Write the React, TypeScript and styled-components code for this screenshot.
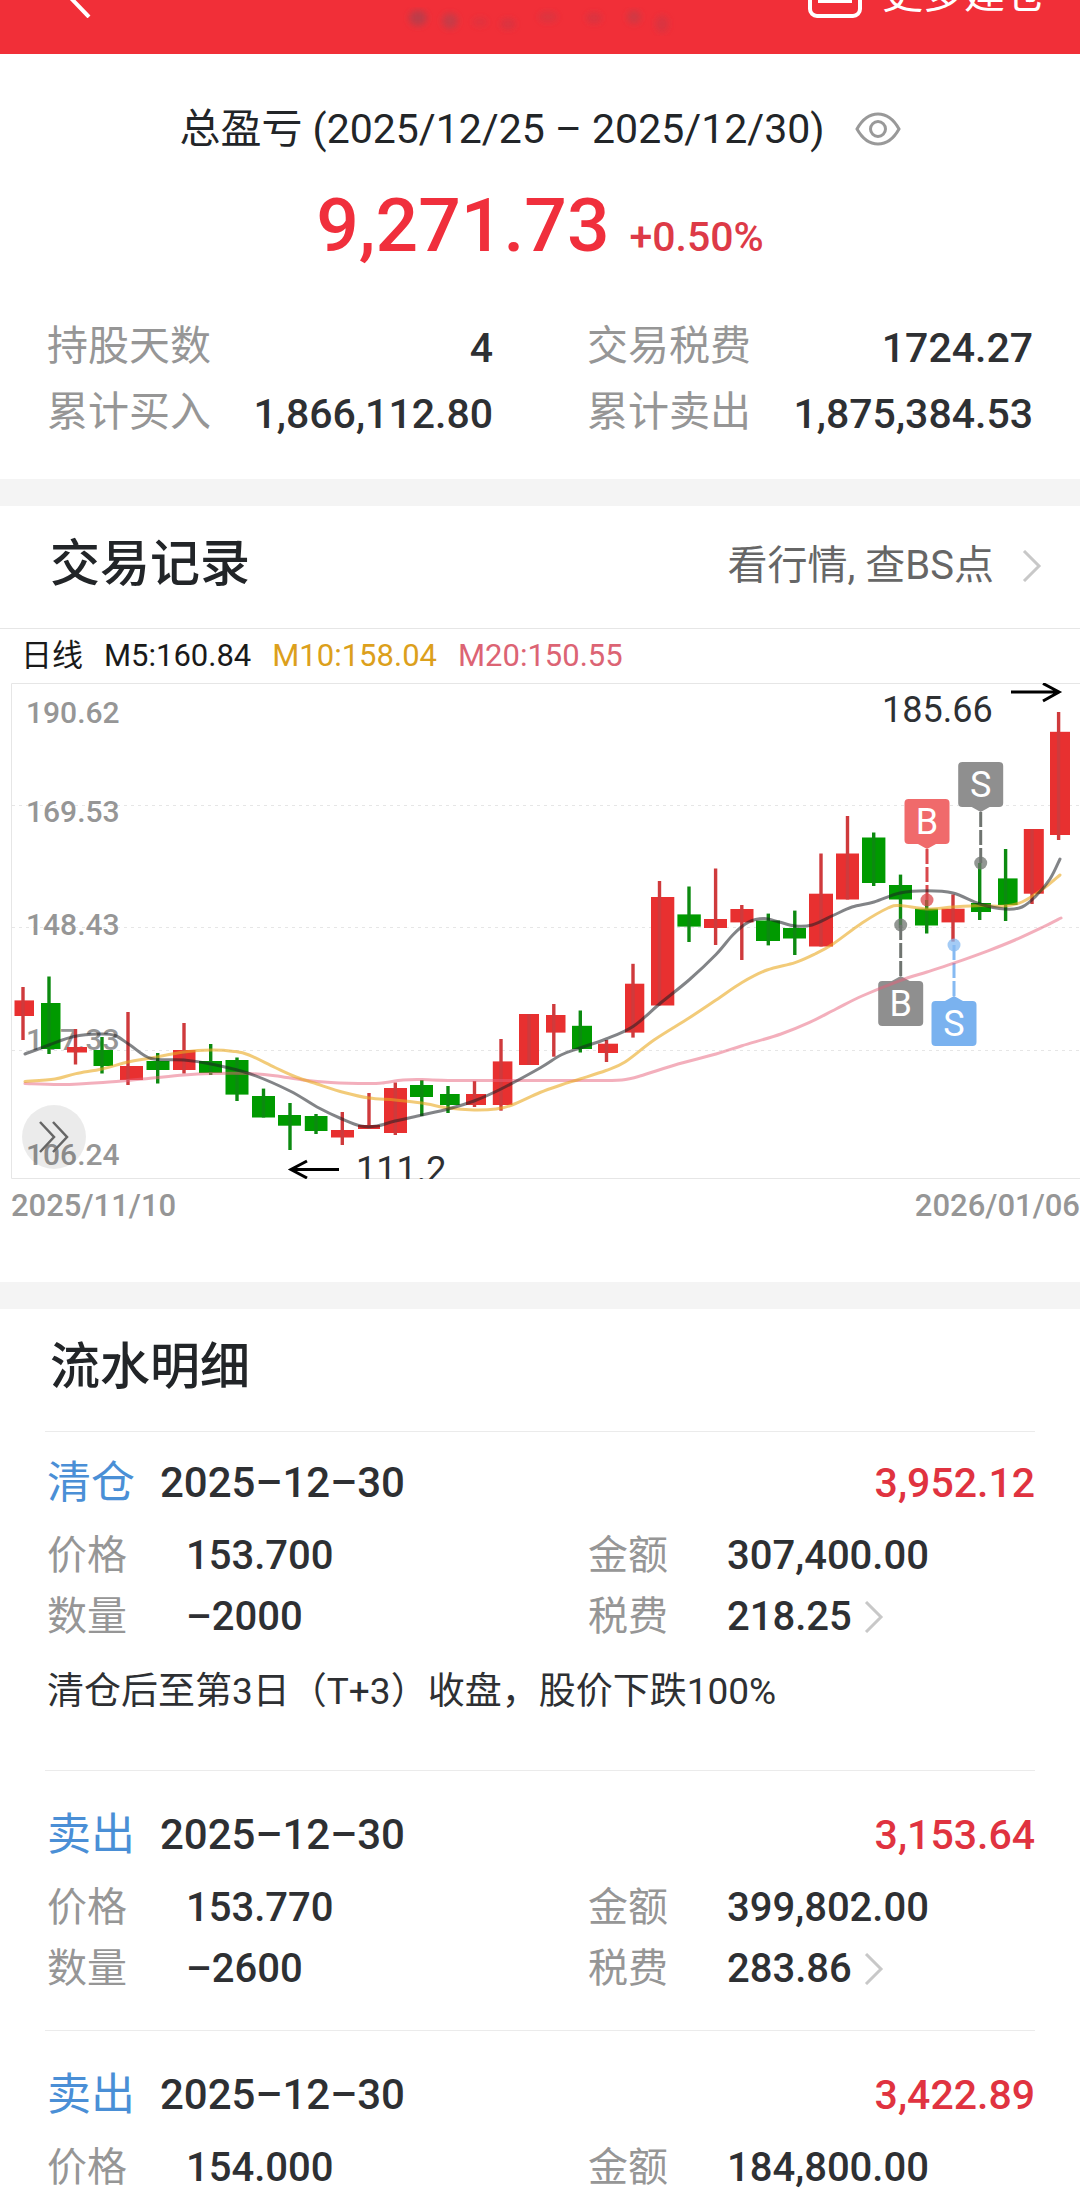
import React from 'react';
import styled, { createGlobalStyle } from 'styled-components';

const GlobalStyle = createGlobalStyle`
  *, *::before, *::after { box-sizing: border-box; }
  body {
    margin: 0;
    background: #fff;
    color: #2e3033;
    font-family: Roboto, "Noto Sans CJK SC", sans-serif;
  }
  button { border: 0; padding: 0; background: none; font: inherit; color: inherit; cursor: pointer; }
  h1, h2, p, dl, dd, ul { margin: 0; padding: 0; font-weight: 400; }
  svg { display: block; flex: none; }
`;

const Page = styled.main`
  overflow: hidden;
`;

const TopBar = styled.header`
  display: grid;
  grid-template-columns: 1fr auto 1fr;
  grid-template-rows: minmax(0, 1fr);
  align-items: end;
  height: 54px;
  padding: 0 34px 12px;
  overflow: hidden;
  background: #f12f38;
  color: #fff;
`;

const TopButton = styled.button<{ $side: 'start' | 'end' }>`
  display: flex;
  align-items: flex-end;
  justify-self: ${(p) => p.$side};
  gap: 20px;
  margin: 0 0 24px ${(p) => (p.$side === 'start' ? 30 : 0)}px;
  font-size: 41px;
  line-height: 48px;
`;

const TopLabel = styled.span`
  height: 48px;
`;

const Summary = styled.section`
  padding: 45px 47px 34px;
`;

const PeriodRow = styled.div`
  display: flex;
  align-items: center;
  justify-content: center;
  gap: 30px;
  height: 60px;
`;

const Period = styled.h1`
  font-size: 41px;
  line-height: 60px;
  color: #222528;
`;

const TotalRow = styled.p`
  display: flex;
  align-items: baseline;
  justify-content: center;
  gap: 20px;
  margin: 21px 0 43px;
`;

const Total = styled.strong`
  font-size: 75px;
  line-height: 90px;
  font-weight: 500;
  color: #f02f3c;
`;

const Percent = styled.span`
  font-size: 41px;
  line-height: 48px;
  font-weight: 500;
  color: #dd3a47;
`;

const TwoColumns = styled.dl`
  display: grid;
  grid-template-columns: 1fr 1fr;
  column-gap: 94px;
`;

const Stat = styled.div`
  display: flex;
  align-items: center;
  justify-content: space-between;
  height: 66px;
  font-size: 41px;

  dd { padding-top: 4px; }
`;

const Label = styled.dt`
  line-height: 60px;
  color: #969696;
`;

const Value = styled.dd`
  line-height: 60px;
  font-weight: 500;
`;

const Band = styled.hr`
  height: 27px;
  margin: 0;
  border: 0;
  background: #f4f4f4;
`;

const SectionHead = styled.div`
  display: flex;
  align-items: center;
  justify-content: space-between;
  height: 122px;
  padding: 0 38px 6px 50px;
`;

const SectionTitle = styled.h2`
  font-size: 50px;
  line-height: 60px;
  font-weight: 500;
  color: #222528;
`;

const QuoteLink = styled.a`
  display: flex;
  align-items: center;
  gap: 28px;
  padding-top: 4px;
  font-size: 40px;
  line-height: 60px;
  color: #666;
  text-decoration: none;
`;

const Legend = styled.div`
  display: flex;
  align-items: center;
  gap: 21px;
  height: 55px;
  padding-left: 21px;
  border-top: 1px solid #e6e6e6;
  font-size: 31px;
  line-height: 40px;
  color: #1a1a1a;
`;

const LegendItem = styled.span<{ $color: string }>`
  color: ${(p) => p.$color};
`;

const ChartArea = styled.div`
  position: relative;
`;

const ExpandButton = styled.button`
  position: absolute;
  left: 2%;
  bottom: 10px;
  display: grid;
  place-items: center;
  width: 64px;
  height: 64px;
  border-radius: 50%;
  background: rgba(0, 0, 0, 0.08);
`;

const DateAxis = styled.div`
  display: flex;
  justify-content: space-between;
  height: 103px;
  padding-left: 11px;
  font-size: 31px;
  line-height: 54px;
  font-weight: 500;
  color: #969696;
  white-space: nowrap;
`;

const Records = styled.ul`
  padding: 0 45px;
  list-style: none;
`;

const Record = styled.li<{ $compact?: boolean }>`
  padding: ${(p) => (p.$compact ? 21 : 34)}px 0 31px 2px;
  border-top: 1px solid #ebebeb;
  &:last-child { padding-bottom: 0; }
`;

const RecordHead = styled.div`
  display: flex;
  align-items: center;
  gap: 25px;
  height: 60px;
  margin-bottom: 12px;
  line-height: 60px;
  font-weight: 500;
`;

const Action = styled.span`
  font-size: 44px;
  font-weight: 400;
  color: #4a8fd6;
`;

const RecordDate = styled.time`
  font-size: 42px;
`;

const Profit = styled.span`
  margin-left: auto;
  font-size: 41px;
  color: #e03340;
`;

const Field = styled.div`
  display: grid;
  grid-template-columns: 139px 1fr;
  align-items: center;
  height: 61px;
  font-size: 40px;
`;

const FeeButton = styled.button`
  display: flex;
  align-items: center;
  gap: 12px;
`;

const Note = styled.p`
  margin: 20px 0 22px;
  font-size: 37px;
  line-height: 50px;
`;

function Chevron() {
  return (
    <svg width="20" height="32" viewBox="0 0 20 32" fill="none" stroke="#c8c8c8" strokeWidth="3" aria-hidden="true">
      <path d="M2 1 17 16 2 31" />
    </svg>
  );
}

type Candle = [left: number, right: number, top: number, bottom: number, wick: number, high: number, low: number, up: 0 | 1];

const candles: Candle[] = [
  [14.5, 34, 1000.4, 1016, 23, 987, 1040, 1],
  [41, 60.5, 1003, 1049, 49, 976.5, 1054, 0],
  [67, 87, 1047, 1052.5, 75.5, 1029, 1064.5, 1],
  [93.5, 113, 1050, 1066, 102, 1037, 1073.5, 0],
  [120, 143, 1066, 1080, 128, 1012, 1085, 1],
  [146.5, 169.5, 1061, 1070, 157.7, 1053, 1083.5, 0],
  [173, 195.5, 1050, 1070, 184, 1023, 1073.5, 1],
  [199, 222, 1061, 1073, 210.7, 1044, 1075, 0],
  [225.5, 248.5, 1060, 1094.6, 237, 1057.5, 1101, 0],
  [252, 275, 1096, 1117.5, 263.5, 1088.6, 1117.5, 0],
  [278, 301, 1115, 1125.7, 290, 1103, 1150, 0],
  [304.8, 327.5, 1116, 1131, 316, 1114, 1134, 0],
  [331, 354, 1130, 1137.5, 342.3, 1112, 1145, 1],
  [358, 380, 1125, 1129, 369, 1093, 1129, 1],
  [384, 407, 1088, 1133, 395.3, 1082.5, 1135, 1],
  [410, 433, 1085, 1097, 421.8, 1080, 1116, 0],
  [440, 459.7, 1094, 1105, 448, 1086, 1113, 0],
  [466, 486, 1094, 1105, 474.5, 1081, 1107, 1],
  [492.8, 512.4, 1061.4, 1105, 501, 1039, 1110.7, 1],
  [519, 539, 1014, 1065, 529, 1014, 1065, 1],
  [546, 565.5, 1015, 1032.6, 553.8, 1004, 1056.7, 1],
  [572, 592, 1025.8, 1049, 580.3, 1010.5, 1052.5, 0],
  [598, 618, 1043.7, 1053, 606.5, 1040, 1062, 1],
  [625, 644.3, 983.7, 1032.6, 633, 963.8, 1037.6, 1],
  [651, 674.3, 897, 1005.5, 659.5, 881, 1005.5, 1],
  [677.4, 700.8, 914.4, 926.6, 689, 886.5, 942, 0],
  [704, 727, 919, 928, 715.6, 868.5, 945, 1],
  [730.4, 753.5, 909, 922.4, 741.8, 905, 960, 1],
  [756, 780, 920.5, 941, 768.3, 913.6, 945.4, 0],
  [783, 806, 928, 938.5, 794.8, 910.6, 955, 0],
  [809, 833, 893.7, 946.5, 821, 853.5, 946.5, 1],
  [836, 859, 853.5, 899.5, 847.5, 816, 899.5, 1],
  [862, 885.4, 837.5, 883, 873.7, 832.5, 886, 0],
  [889, 912, 885, 899.5, 900.5, 874.6, 928, 0],
  [915, 938, 908.7, 925.5, 926.7, 900, 933.5, 0],
  [941.5, 964.6, 908.7, 922.4, 953, 894.5, 941.6, 1],
  [971, 991, 903, 912, 979.7, 863, 920, 0],
  [998, 1017.6, 878.4, 905, 1005.6, 849, 921, 0],
  [1023.8, 1043.8, 829, 893.7, 1032, 829, 904, 1],
  [1050, 1070, 731.8, 835, 1058.6, 712, 840, 1],
];

const ma5 = [
  25, 1054, 49, 1045, 74, 1036.5, 100, 1034, 115, 1035.5, 130, 1045, 151, 1058.5, 184, 1060, 211, 1064, 249, 1073.5,
  290, 1091, 317, 1107, 342, 1119, 361, 1126, 377, 1126, 395, 1121, 422, 1115, 448, 1109, 474, 1101, 501, 1089,
  540, 1068, 561, 1055, 580, 1048, 606, 1039, 633, 1026.5, 660, 1003.5, 689, 980, 716, 954.5, 733, 934.7,
  748, 922.4, 764, 918.6, 779, 922, 795, 926, 812, 925, 833, 915.5, 852, 907, 874, 902, 900, 893, 927, 890.7,
  953, 893, 980, 904, 1005, 909, 1022, 907, 1036, 896, 1050, 879, 1060, 859,
];

const ma10 = [
  25, 1081.4, 55, 1079, 76, 1073.6, 102, 1069, 128, 1062, 151, 1058, 184, 1052, 211, 1050, 234, 1051.4, 249, 1055,
  275, 1067.5, 296, 1077, 317, 1084, 344, 1092.5, 369, 1098, 395, 1100, 422, 1103, 448, 1108, 474, 1110, 496, 1109,
  512, 1105, 540, 1092.5, 561, 1085, 580, 1079, 606, 1070.5, 625, 1062, 654, 1040, 689, 1018, 716, 1000,
  742, 982.5, 767, 970, 795, 962.6, 815, 954, 833, 944, 862, 923, 888, 908, 900, 905.6, 927, 909, 953, 907,
  980, 905.6, 1005, 906, 1022, 902, 1043, 889, 1060, 875,
];

const ma20 = [
  25, 1083.6, 62, 1084.6, 103, 1082.5, 143, 1079, 184, 1075, 211, 1073.6, 249, 1073.6, 275, 1075.7, 303, 1080,
  331, 1082.5, 369, 1083.6, 382, 1083, 403, 1080, 422, 1079.6, 448, 1080.4, 540, 1080.4, 600, 1080.4, 622, 1080,
  640, 1076, 678, 1064, 716, 1054, 742, 1045.7, 781, 1034, 809, 1022.7, 836, 1009, 862, 996, 900, 980.6, 927, 972,
  953, 963.4, 988, 950.8, 1015, 940, 1043, 927, 1061, 918,
];

/* Catmull-Rom spline through flat x, y pairs */
function spline(values: number[]) {
  const points: [number, number][] = [];
  for (let i = 0; i < values.length; i += 2) points.push([values[i], values[i + 1]]);
  let d = `M${points[0][0]} ${points[0][1]}`;
  for (let i = 0; i < points.length - 1; i += 1) {
    const before = points[i - 1] ?? points[i];
    const from = points[i];
    const to = points[i + 1];
    const after = points[i + 2] ?? to;
    d += `C${from[0] + (to[0] - before[0]) / 6} ${from[1] + (to[1] - before[1]) / 6} `;
    d += `${to[0] - (after[0] - from[0]) / 6} ${to[1] - (after[1] - from[1]) / 6} ${to[0]} ${to[1]}`;
  }
  return d;
}

const markers = [
  { text: 'S', x: 980.7, box: 762, dot: 863, color: '#8f8f8f', dotColor: '#6f7470' },
  { text: 'B', x: 927, box: 799, dot: 900, color: '#f06a6b', dotColor: '#d9484c' },
  { text: 'B', x: 900.7, box: 981, dot: 925, color: '#8f8f8f', dotColor: '#6f7470' },
  { text: 'S', x: 954, box: 1001, dot: 945, color: '#7ab2ef', dotColor: '#86baf2' },
];

const priceLabels = [
  { text: '190.62', y: 723 },
  { text: '169.53', y: 822 },
  { text: '148.43', y: 935 },
  { text: '117.33', y: 1050 },
  { text: '106.24', y: 1165 },
];

function Marker({ text, x, box, dot, color, dotColor }: (typeof markers)[number]) {
  const above = box < dot;
  const edge = above ? box + 45 : box;
  const tip = above ? edge + 5 : edge - 5;
  return (
    <g>
      <circle cx={x} cy={dot} r="6.5" fill={dotColor} opacity="0.75" />
      <line x1={x} x2={x} y1={tip} y2={dot} stroke={dotColor} strokeWidth="3" strokeDasharray="15 3" />
      <rect x={x - 22.5} y={box} width="45" height="45" rx="4" fill={color} />
      <path d={`M${x - 9} ${edge}L${x} ${tip}L${x + 9} ${edge}Z`} fill={color} />
      <text x={x} y={box + 35} fontSize="36" textAnchor="middle" fill="#fff">{text}</text>
    </g>
  );
}

function KLineChart() {
  return (
    <svg width="100%" viewBox="0 683 1080 496" role="img" aria-label="日线">
      <g stroke="#e6e6e6" fill="none">
        <path d="M1080 683.5H11.5V1178.5H1080" />
        <path d="M12 805.5H1080M12 927.5H1080M12 1050.5H1080" strokeDasharray="3 4" />
      </g>
      <g fontSize="30" fontWeight="500" fill="#969696">
        {priceLabels.map((label) => (
          <text key={label.text} x="26" y={label.y}>{label.text}</text>
        ))}
      </g>
      {candles.map(([left, right, top, bottom, wick, high, low, up]) => (
        <g key={left} fill={up ? '#e83030' : '#009a00'}>
          <rect x={left} y={top} width={right - left} height={bottom - top} />
          <rect x={wick - 1.7} y={high} width="3.4" height={low - high} fill={up ? '#cf3a3c' : '#0c8a10'} />
        </g>
      ))}
      {markers.map((marker) => (
        <Marker key={marker.x} {...marker} />
      ))}
      <g fill="none" strokeWidth="3" strokeLinecap="round">
        <path d={spline(ma20)} stroke="#e8607a" strokeOpacity="0.5" />
        <path d={spline(ma10)} stroke="#eaa820" strokeOpacity="0.6" />
        <path d={spline(ma5)} stroke="#1c1f24" strokeOpacity="0.55" />
      </g>
      <g stroke="#000" strokeWidth="3" fill="none">
        <path d="M1011 692H1059M1043 683.5 1059 692 1043 701" />
        <path d="M339 1169.5H291M307 1161 291 1169.5 307 1178" />
      </g>
      <g fontSize="36" fill="#2e3033">
        <text x="882" y="722">185.66</text>
        <text x="356" y="1182">111.2</text>
      </g>
    </svg>
  );
}

interface RecordData {
  action: string;
  date: string;
  profit: string;
  price: string;
  amount: string;
  quantity?: string;
  fee?: string;
  note?: string;
}

const records: RecordData[] = [
  {
    action: '清仓',
    date: '2025–12–30',
    profit: '3,952.12',
    price: '153.700',
    amount: '307,400.00',
    quantity: '–2000',
    fee: '218.25',
    note: '清仓后至第3日（T+3）收盘，股价下跌100%',
  },
  {
    action: '卖出',
    date: '2025–12–30',
    profit: '3,153.64',
    price: '153.770',
    amount: '399,802.00',
    quantity: '–2600',
    fee: '283.86',
  },
  { action: '卖出', date: '2025–12–30', profit: '3,422.89', price: '154.000', amount: '184,800.00' },
];

const stats = [
  ['持股天数', '4'],
  ['交易税费', '1724.27'],
  ['累计买入', '1,866,112.80'],
  ['累计卖出', '1,875,384.53'],
];

export default function App() {
  return (
    <Page>
      <GlobalStyle />
      <TopBar>
        <TopButton $side="start" aria-label="返回">
          <svg width="28" height="48" viewBox="0 0 28 48" fill="none" stroke="#fff" strokeWidth="4" aria-hidden="true">
            <path d="M25 1 3 24 25 47" />
          </svg>
        </TopButton>
        <svg width="280" height="38" viewBox="0 0 280 38" aria-hidden="true">
          <defs>
            <filter id="smudge"><feGaussianBlur stdDeviation="3" /></filter>
          </defs>
          <g filter="url(#smudge)" fill="#b0404e">
            <ellipse cx="18" cy="14" rx="9" ry="8" opacity="0.8" />
            <ellipse cx="50" cy="17" rx="8" ry="8" opacity="0.65" />
            <ellipse cx="80" cy="18" rx="8" ry="5" opacity="0.25" />
            <ellipse cx="108" cy="20" rx="8" ry="6" opacity="0.35" />
            <ellipse cx="148" cy="13" rx="10" ry="6" opacity="0.3" />
            <ellipse cx="194" cy="14" rx="8" ry="6" opacity="0.35" />
            <ellipse cx="234" cy="13" rx="7" ry="7" opacity="0.5" />
            <ellipse cx="262" cy="20" rx="7" ry="9" opacity="0.35" />
          </g>
        </svg>
        <TopButton $side="end">
          <svg width="54" height="50" viewBox="0 0 54 50" fill="none" stroke="#fff" strokeWidth="4" aria-hidden="true">
            <rect x="2" y="2" width="50" height="46" rx="7" />
            <path d="M10 33H44" />
          </svg>
          <TopLabel>更多建仓</TopLabel>
        </TopButton>
      </TopBar>

      <Summary>
        <PeriodRow>
          <Period>总盈亏 (2025/12/25 – 2025/12/30)</Period>
          <button aria-label="隐藏金额">
            <svg width="46" height="34" viewBox="0 0 46 34" fill="none" stroke="#999" strokeWidth="3" aria-hidden="true">
              <path d="M2 17C7 8 14 2 23 2S39 8 44 17C39 26 32 32 23 32S7 26 2 17Z" />
              <circle cx="23" cy="17" r="7.5" />
            </svg>
          </button>
        </PeriodRow>
        <TotalRow>
          <Total>9,271.73</Total>
          <Percent>+0.50%</Percent>
        </TotalRow>
        <TwoColumns>
          {stats.map(([label, value]) => (
            <Stat key={label}>
              <Label>{label}</Label>
              <Value>{value}</Value>
            </Stat>
          ))}
        </TwoColumns>
      </Summary>

      <Band />
      <section>
        <SectionHead>
          <SectionTitle>交易记录</SectionTitle>
          <QuoteLink href="#quote">
            看行情, 查BS点
            <Chevron />
          </QuoteLink>
        </SectionHead>
        <Legend>
          <span>日线</span>
          <LegendItem $color="#1a1a1a">M5:160.84</LegendItem>
          <LegendItem $color="#dca01c">M10:158.04</LegendItem>
          <LegendItem $color="#dc6474">M20:150.55</LegendItem>
        </Legend>
        <ChartArea>
          <KLineChart />
          <ExpandButton aria-label="展开">
            <svg width="30" height="32" viewBox="0 0 30 32" fill="none" stroke="#666" strokeWidth="2.5" aria-hidden="true">
              <path d="M1 1 15 16 1 31M14 1 28 16 14 31" />
            </svg>
          </ExpandButton>
        </ChartArea>
        <DateAxis>
          <span>2025/11/10</span>
          <span>2026/01/06</span>
        </DateAxis>
      </section>

      <Band />
      <section>
        <SectionHead>
          <SectionTitle>流水明细</SectionTitle>
        </SectionHead>
        <Records>
          {records.map((record) => (
            <Record key={record.profit} $compact={Boolean(record.note)}>
              <RecordHead>
                <Action>{record.action}</Action>
                <RecordDate>{record.date}</RecordDate>
                <Profit>{record.profit}</Profit>
              </RecordHead>
              <TwoColumns>
                <Field>
                  <Label>价格</Label>
                  <Value>{record.price}</Value>
                </Field>
                <Field>
                  <Label>金额</Label>
                  <Value>{record.amount}</Value>
                </Field>
                {record.quantity && (
                  <Field>
                    <Label>数量</Label>
                    <Value>{record.quantity}</Value>
                  </Field>
                )}
                {record.fee && (
                  <Field>
                    <Label>税费</Label>
                    <Value>
                      <FeeButton>
                        {record.fee}
                        <Chevron />
                      </FeeButton>
                    </Value>
                  </Field>
                )}
              </TwoColumns>
              {record.note && <Note>{record.note}</Note>}
            </Record>
          ))}
        </Records>
      </section>
    </Page>
  );
}
